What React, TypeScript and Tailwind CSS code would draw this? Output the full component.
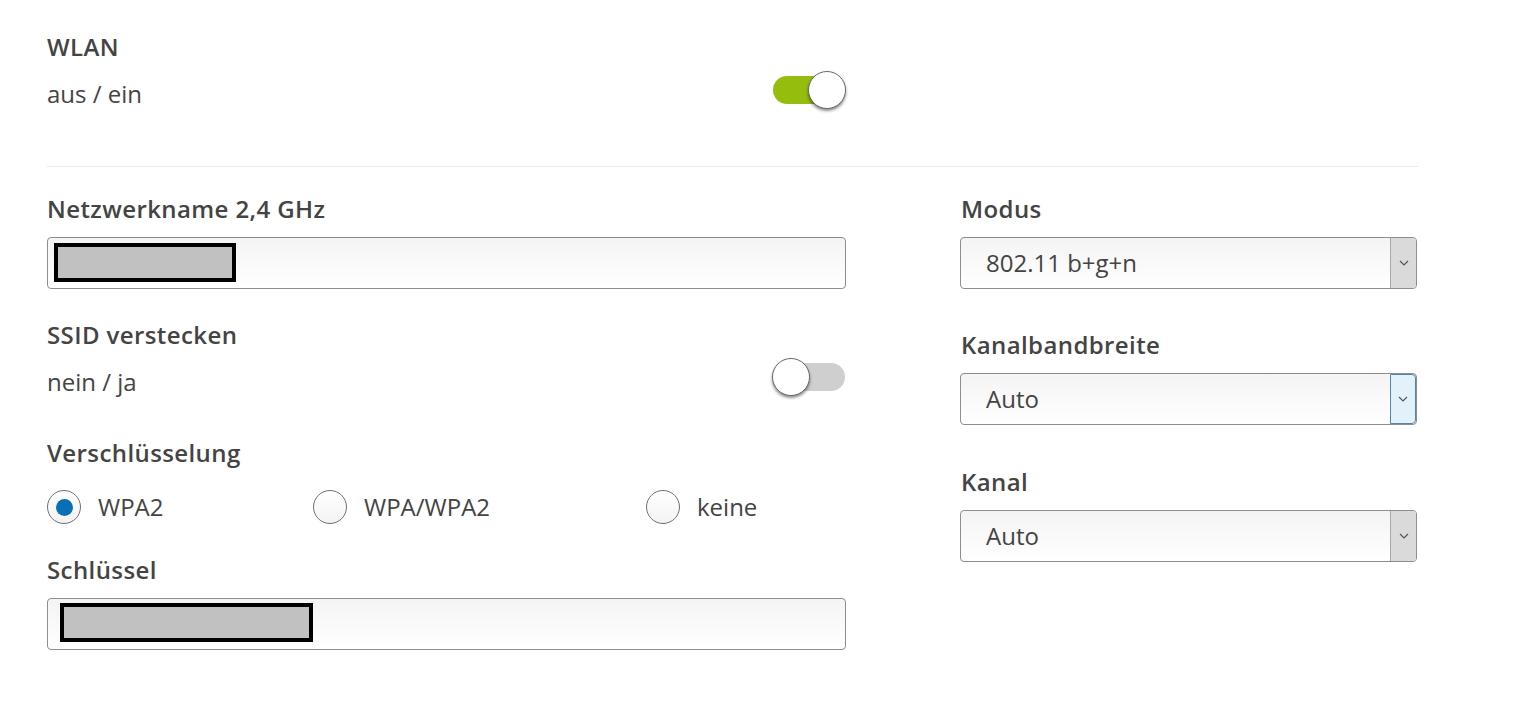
import React from "react";

const font = { fontFamily: '"Open Sans", "Noto Sans", sans-serif' };

function Toggle({ on }: { on: boolean }) {
  return (
    <div className="relative w-[74px] h-[38px] flex items-center">
      <div
        className={
          "ml-[1px] w-[72px] h-[28px] rounded-full " +
          (on ? "bg-[#95bd0e]" : "bg-[#cfcfcf]")
        }
      />
      <div
        className={
          "absolute top-0 w-[38px] h-[38px] rounded-full bg-white border border-[#6b6b6b] shadow-[0_2px_3px_rgba(0,0,0,0.45)] " +
          (on ? "right-0" : "left-0")
        }
      />
    </div>
  );
}

function TextInput({ left, top, w }: { left: string; top: string; w: string }) {
  return (
    <div className="h-[52px] w-full rounded-[4px] border border-[#8e8e8e] bg-gradient-to-b from-[#f4f4f4] to-white flex">
      <div className={`${left} ${top} ${w} h-[39px] border-[4px] border-black bg-[#c1c1c1]`} />
    </div>
  );
}

function Select({ value, focused }: { value: string; focused?: boolean }) {
  return (
    <div className="h-[52px] w-full rounded-[4px] border border-[#8e8e8e] bg-gradient-to-b from-[#f4f4f4] to-white flex items-stretch overflow-hidden">
      <div className="flex-1 flex items-center pl-[25px] text-[24px] text-[#444]">{value}</div>
      <div
        className={
          "w-[26px] flex items-center justify-center border-l " +
          (focused
            ? "bg-[#e3f1fb] border-[#4d88b4] border-y border-r rounded-r-[4px]"
            : "bg-[#dadada] border-[#a8a8a8]")
        }
      >
        <svg width="10" height="6" viewBox="0 0 10 6">
          <path d="M1 1 L5 5 L9 1" fill="none" stroke="#555" strokeWidth="1.2" />
        </svg>
      </div>
    </div>
  );
}

function Radio({ checked, label }: { checked?: boolean; label: string }) {
  return (
    <div className="flex items-center h-[34px]">
      <div className="w-[34px] h-[34px] rounded-full border border-[#707070] bg-gradient-to-b from-white to-[#f3f3f3] flex items-center justify-center">
        {checked && <div className="w-[17px] h-[17px] rounded-full bg-[#0b6fb8]" />}
      </div>
      <span className="ml-[17px] text-[24px] text-[#444] leading-[30px]">{label}</span>
    </div>
  );
}

const label = "text-[24px] font-semibold tracking-[0.4px] text-[#444] leading-[30px]";
const sub = "text-[24px] text-[#444] leading-[30px]";

export default function App() {
  return (
    <div className="w-[1515px] h-[702px] bg-white overflow-hidden" style={font}>
      <div className="pl-[47px] pt-[32px] w-[1418px]">
        <div className="w-[799px] flex justify-between">
          <div>
            <div className={label}>WLAN</div>
            <div className={sub + " mt-[17px]"}>aus / ein</div>
          </div>
          <div className="mt-[39px]">
            <Toggle on />
          </div>
        </div>
        <div className="mt-[57px] border-t border-[#ebebeb]" />
        <div className="flex mt-[27px]">
          <div className="w-[799px] flex flex-col">
            <div className={label}>Netzwerkname 2,4 GHz</div>
            <div className="mt-[13px]">
              <TextInput left="ml-[6px]" top="mt-[5px]" w="w-[182px]" />
            </div>
            <div className="flex justify-between mt-[31px]">
              <div>
                <div className={label}>SSID verstecken</div>
                <div className={sub + " mt-[17px]"}>nein / ja</div>
              </div>
              <div className="mt-[38px]">
                <Toggle on={false} />
              </div>
            </div>
            <div className={label + " mt-[41px]"}>Verschlüsselung</div>
            <div className="flex mt-[22px]">
              <div className="w-[266px]">
                <Radio checked label="WPA2" />
              </div>
              <div className="w-[333px]">
                <Radio label="WPA/WPA2" />
              </div>
              <div>
                <Radio label="keine" />
              </div>
            </div>
            <div className={label + " mt-[31px]"}>Schlüssel</div>
            <div className="mt-[13px]">
              <TextInput left="ml-[12px]" top="mt-[4px]" w="w-[253px]" />
            </div>
          </div>
          <div className="ml-[114px] w-[457px] flex flex-col">
            <div className={label + " pl-[1px]"}>Modus</div>
            <div className="mt-[13px]">
              <Select value="802.11 b+g+n" />
            </div>
            <div className={label + " pl-[1px] mt-[41px]"}>Kanalbandbreite</div>
            <div className="mt-[13px]">
              <Select value="Auto" focused />
            </div>
            <div className={label + " pl-[1px] mt-[42px]"}>Kanal</div>
            <div className="mt-[13px]">
              <Select value="Auto" />
            </div>
          </div>
        </div>
      </div>
    </div>
  );
}
